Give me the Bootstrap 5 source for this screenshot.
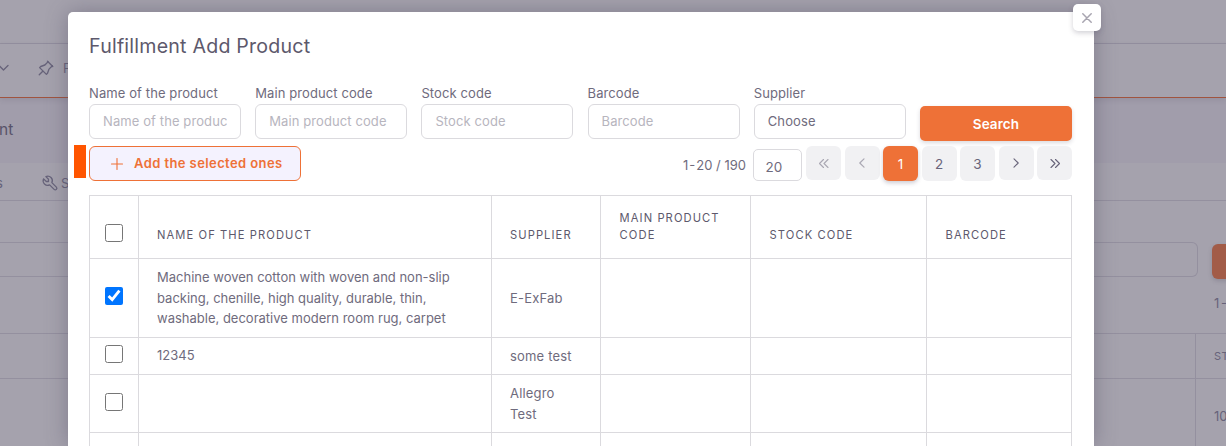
<!DOCTYPE html>
<html lang="en">
<head>
<meta charset="utf-8">
<meta name="viewport" content="width=device-width, initial-scale=1">
<title>Fulfillment Add Product</title>
<link href="https://cdn.jsdelivr.net/npm/bootstrap@5.3.0/dist/css/bootstrap.min.css" rel="stylesheet">
<style>
  :root { --brand: #ee7137; --ink: #6f6b7d; --line: #dbdade; --shade: #94909f; }
  html, body { height: 446px; overflow: hidden; }
  body { font-family: Inter, "Liberation Sans", sans-serif; font-size: 13px; line-height: 20px; color: var(--ink); background: #a19dab; }
  svg { display: block; fill: none; stroke: currentColor; stroke-linecap: round; stroke-linejoin: round; }

  /* dimmed page behind the dialog */
  .page { height: 446px; overflow: hidden; color: #67637a; background: #a19dab; }
  .page-top { height: 44px; background: #a5a2ad; border-bottom: 1px solid var(--shade); }
  .page-menu { height: 54px; background: #a5a2ad; border-bottom: 1px solid #a0543f; box-shadow: 0 2px 5px rgba(75,70,92,.14); padding-bottom: 6px; }
  .page-menu svg + svg { margin-left: 28px; }
  .page-title { height: 65px; font-size: 15.5px; color: #585369; }
  .page-tabs { height: 38px; background: #a5a2ad; border-bottom: 1px solid var(--shade); padding-top: 3px; }
  .page-body { background: #a5a2ad; height: 245px; }
  .page-filter { height: 132px; padding-top: 41px; }
  .page-input { width: 1198px; height: 35px; border: 1px solid var(--shade); border-left: 0; border-radius: 0 6px 6px 0; flex: none; }
  .page-btn { width: 30px; height: 35px; margin: 2px 0 0 14px; border-radius: 6px; background: #a25c48; box-shadow: 0 2px 4px rgba(75,70,92,.25); }
  .page-count { height: 20px; padding-left: 1214px; margin-top: 14px; white-space: nowrap; word-spacing: -2px; }
  .page-row { border-top: 1px solid var(--shade); }
  .page-cell { width: 1196px; border-right: 1px solid var(--shade); }

  /* dialog */
  .dialog { position: absolute; left: 68px; top: 12px; width: 1026px; height: 434px; overflow: visible; background: #fff; border-radius: 5px 5px 0 0; box-shadow: 0 0 22px rgba(75,70,92,.42); padding: 21px 22px 0 21px; }
  .dialog-close { position: absolute; left: 1005px; top: -8px; width: 28px; height: 27px; border-radius: 5px; background: #fff; color: #a8a5b0; box-shadow: 0 2px 5px rgba(75,70,92,.25); }
  .dialog-title { height: 24px; margin: 0 0 27px; font-size: 19.6px; line-height: 26px; letter-spacing: .22px; font-weight: 400; color: #5d596c; }
  .filters { height: 55px; gap: 14.2px; }
  .filters > div { width: 152px; flex: none; }
  .filters label { display: block; height: 20px; line-height: 19px; white-space: nowrap; letter-spacing: .1px; }
  .filters .form-control { height: 35px; border: 1px solid var(--line); border-radius: 6px; padding: 0 13px; font-size: 13px; color: var(--ink); line-height: 33px; letter-spacing: .1px; }
  .filters input.form-control { padding-bottom: 1px; }
  .filters .form-control::placeholder { color: #b7b5be; opacity: 1; }
  .btn-find { width: 152px; height: 35px; margin: 22px 0 0 auto; border-radius: 5px; background: var(--brand); color: #fff; font-size: 13.5px; font-weight: 600; line-height: 36px; letter-spacing: .1px; padding: 0; border: 0; box-shadow: 0 2px 4px rgba(75,70,92,.2); }
  .tools { height: 56px; padding-top: 7px; }
  .marker { width: 12px; height: 33px; background: #ff5500; margin: -1px 3px 0 -15px; }
  .btn-add { width: 212px; height: 35px; border: 1px solid var(--brand); border-radius: 6px; background: #f4f2fe; color: var(--brand); font-size: 13px; font-weight: 600; letter-spacing: .41px; line-height: 33px; padding: 0 0 0 21px; }
  .pager { gap: 3.5px; }
  .count { margin: 9px 2px 0 0; }
  .count span { word-spacing: -2.6px; }
  .size-box { width: 49px; height: 32px; margin: 3px 1px 0 1px; border: 1px solid var(--line); border-radius: 5px; padding-left: 12px; line-height: 35px; font-size: 13.5px; }
  .pg { width: 35px; height: 35px; border-radius: 6px; background: #f1f1f3; font-size: 13.5px; color: #68647a; }
  .pg-arrow { height: 34px; }
  .pg-off { color: #aaa8b3; }
  .pg-on { background: var(--brand); color: #fff; box-shadow: 0 2px 4px rgba(75,70,92,.28); }

  .table-clip { height: 251px; overflow: hidden; }
  .products { width: 983px; table-layout: fixed; border-collapse: separate; border-spacing: 0; border-left: 1px solid var(--line); border-top: 1px solid var(--line); }
  .products th, .products td { border-right: 1px solid var(--line); border-bottom: 1px solid var(--line); padding: 0 18px; vertical-align: middle; line-height: 20.6px; }
  .products th { font-size: 11.2px; font-weight: 400; letter-spacing: 1.08px; line-height: 17px; color: #5d596c; vertical-align: bottom; padding-bottom: 14px; }
  .products th:nth-child(n+4) { padding-left: 18.6px; }
  .products th:first-child, .products td:first-child { padding: 0; vertical-align: middle; }
  .products td:first-child { padding-bottom: 4px; }
  .products td:nth-child(3) { letter-spacing: .18px; }
  .products input { display: block; width: 18px; height: 18px; margin: 0 auto; accent-color: #0075ff; }
</style>
</head>
<body>
<main class="page">
  <div class="page-top"></div>
  <div class="page-menu d-flex align-items-center position-relative">
    <svg width="9" height="8" viewBox="0 0 9 8" stroke-width="1.3"><path d="M-1 1.5 3.5 6 8 1.5"/></svg>
    <svg width="18" height="18" viewBox="0 0 24 24" stroke-width="1.8"><path d="M15 3.500 10.500 8l-5.500 2L3.500 11.500l9 9L14 19l2-5.500L20.500 9M8 16l-5 5M14 3l7 7"/></svg>
    <span style="margin-left:8px">F</span>
  </div>
  <div class="page-title d-flex align-items-center" style="padding-bottom:2px"><span style="margin-left:-1px">nt</span></div>
  <div class="page-tabs d-flex align-items-center">
    <span style="margin-left:-4px">s</span>
    <svg style="margin-left:38px" width="18" height="18" viewBox="0 0 24 24" stroke-width="1.7"><path d="M7 10h3V7L6.500 3.500a6 6 0 0 1 8 8l6 6a2 2 0 0 1-3 3l-6-6a6 6 0 0 1-8-8L7 10"/></svg>
    <span style="margin-left:2px">S</span>
  </div>
  <div class="page-body">
    <div class="page-filter">
      <div class="d-flex"><div class="page-input"></div><div class="page-btn flex-shrink-0"></div></div>
      <div class="page-count">1 -</div>
    </div>
    <div class="page-row d-flex" style="height:45px"><div class="page-cell flex-shrink-0"></div><span style="margin:12px 0 0 18px;font-size:11px;letter-spacing:.5px">ST</span></div>
    <div class="page-row d-flex" style="height:68px"><div class="page-cell flex-shrink-0"></div><span style="margin:27px 0 0 18px">10</span></div>
  </div>
</main>

<section class="dialog">
  <button class="dialog-close btn p-0 border-0 d-flex align-items-center justify-content-center" aria-label="Close">
    <svg width="10" height="10" viewBox="0 0 10 10" stroke-width="1.5"><path d="M.8.8l8.400 8.400M9.200.8.8 9.200"/></svg>
  </button>
  <h5 class="dialog-title">Fulfillment Add Product</h5>
  <div class="filters d-flex">
    <div><label>Name of the product</label><input class="form-control" placeholder="Name of the produc"></div>
    <div><label>Main product code</label><input class="form-control" placeholder="Main product code"></div>
    <div><label>Stock code</label><input class="form-control" placeholder="Stock code"></div>
    <div><label>Barcode</label><input class="form-control" placeholder="Barcode"></div>
    <div><label>Supplier</label><div class="form-control">Choose</div></div>
    <button class="btn btn-find flex-shrink-0">Search</button>
  </div>
  <div class="tools d-flex justify-content-between align-items-start">
    <div class="d-flex">
      <div class="marker"></div>
      <button class="btn btn-add d-flex align-items-center">
        <svg width="12" height="12" viewBox="0 0 12 12" stroke-width="1.1"><path d="M6 .5v11M.5 6h11"/></svg>
        <span style="margin-left:11px">Add the selected ones</span>
      </button>
    </div>
    <div class="pager d-flex">
      <div class="count"><span>1 - 20</span> / 190</div>
      <div class="size-box">20</div>
      <div class="pg pg-arrow pg-off d-flex align-items-center justify-content-center"><svg width="10" height="9" viewBox="0 0 10 9" stroke-width="1.1"><path d="M4.500.5l-4 4 4 4M9 .5l-4 4 4 4"/></svg></div>
      <div class="pg pg-arrow pg-off d-flex align-items-center justify-content-center"><svg width="6" height="10" viewBox="0 0 6 10" stroke-width="1.2"><path d="M5 .8.8 5 5 9.200"/></svg></div>
      <div class="pg pg-on d-flex align-items-center justify-content-center">1</div>
      <div class="pg d-flex align-items-center justify-content-center">2</div>
      <div class="pg d-flex align-items-center justify-content-center">3</div>
      <div class="pg pg-arrow d-flex align-items-center justify-content-center"><svg width="6" height="10" viewBox="0 0 6 10" stroke-width="1.1"><path d="M1 .8 5.200 5 1 9.200"/></svg></div>
      <div class="pg pg-arrow d-flex align-items-center justify-content-center"><svg width="10" height="9" viewBox="0 0 10 9" stroke-width="1.1"><path d="M1 .5l4 4-4 4M5.500.5l4 4-4 4"/></svg></div>
    </div>
  </div>
  <div class="table-clip">
    <table class="products">
      <colgroup><col style="width:49px"><col style="width:353px"><col style="width:109px"><col style="width:150px"><col style="width:176px"><col style="width:145px"></colgroup>
      <thead>
        <tr style="height:63px"><th style="padding-top:12px"><input type="checkbox"></th><th>NAME OF THE PRODUCT</th><th>SUPPLIER</th><th>MAIN PRODUCT<br>CODE</th><th>STOCK CODE</th><th>BARCODE</th></tr>
      </thead>
      <tbody>
        <tr style="height:79px"><td><input type="checkbox" checked></td><td>Machine woven cotton with woven and non-slip<br>backing, chenille, high quality, durable, thin,<br>washable, decorative modern room rug, carpet</td><td>E-ExFab</td><td></td><td></td><td></td></tr>
        <tr style="height:37px"><td><input type="checkbox"></td><td style="padding-bottom:2px">12345</td><td>some test</td><td></td><td></td><td></td></tr>
        <tr style="height:58px"><td><input type="checkbox"></td><td></td><td>Allegro<br>Test</td><td></td><td></td><td></td></tr>
        <tr style="height:14px"><td></td><td></td><td></td><td></td><td></td><td></td></tr>
      </tbody>
    </table>
  </div>
</section>
<script src="https://cdn.jsdelivr.net/npm/bootstrap@5.3.0/dist/js/bootstrap.bundle.min.js"></script>
</body>
</html>
